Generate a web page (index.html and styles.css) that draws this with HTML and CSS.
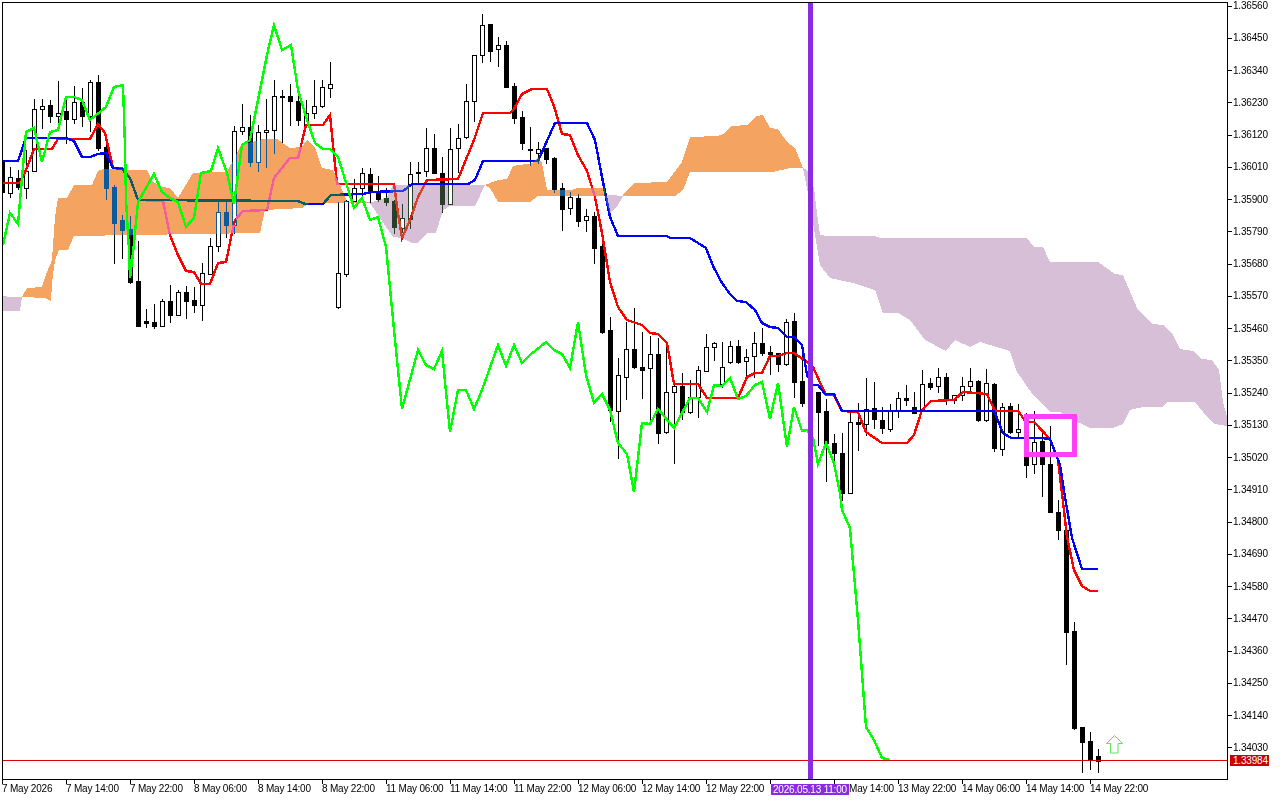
FILE: index.html
```html
<!DOCTYPE html>
<html lang="en">
<head>
<meta charset="utf-8">
<title>GBPUSD chart</title>
<link rel="stylesheet" href="styles.css">
</head>
<body>
<div class="terminal">
  <div class="chart-row">
    <div class="plot">
      <svg class="plot-svg" viewBox="3 3 1224 776" xmlns="http://www.w3.org/2000/svg">
        <defs>
          <clipPath id="hollow-clip"><path id="hollow-clip-path"></path></clipPath>
          <g id="mas">
            <polyline id="line-red" class="ma ma-red"></polyline>
            <polyline id="line-blue" class="ma ma-blue"></polyline>
          </g>
        </defs>
        <rect class="paper" x="3" y="3" width="1224" height="776"></rect>
        <path id="wicks" class="wicks"></path>
        <path id="solid" class="solid"></path>
        <path id="outline" class="outline"></path>
        <use href="#mas"></use>
        <path id="cloud-up" class="cloud cloud-up"></path>
        <path id="cloud-down" class="cloud cloud-down"></path>
        <path id="hollow" class="hollow"></path>
        <g clip-path="url(#hollow-clip)"><use href="#mas"></use></g>
        <polyline id="line-green" class="ma ma-green"></polyline>
        <rect class="price-line" x="3" y="760" width="1224" height="1"></rect>
        <rect class="vline" x="808" y="3" width="5" height="776"></rect>
        <rect class="box" x="1026.5" y="416.5" width="48" height="38"></rect>
        <path class="arrow" d="M1114.5 735.500l8 8h-4.500v9.500h-7.500v-9.500h-4z"></path>
      </svg>
    </div>
    <div class="price-axis">
      <span class="price">1.36560</span>
      <span class="price">1.36450</span>
      <span class="price">1.36340</span>
      <span class="price">1.36230</span>
      <span class="price">1.36120</span>
      <span class="price">1.36010</span>
      <span class="price">1.35900</span>
      <span class="price">1.35790</span>
      <span class="price">1.35680</span>
      <span class="price">1.35570</span>
      <span class="price">1.35460</span>
      <span class="price">1.35350</span>
      <span class="price">1.35240</span>
      <span class="price">1.35130</span>
      <span class="price">1.35020</span>
      <span class="price">1.34910</span>
      <span class="price">1.34800</span>
      <span class="price">1.34690</span>
      <span class="price">1.34580</span>
      <span class="price">1.34470</span>
      <span class="price">1.34360</span>
      <span class="price">1.34250</span>
      <span class="price">1.34140</span>
      <span class="price">1.34030</span>
      <span class="price-tag">1.33984</span>
    </div>
  </div>
  <div class="time-axis">
    <span class="time">7 May 2026</span>
    <span class="time">7 May 14:00</span>
    <span class="time">7 May 22:00</span>
    <span class="time">8 May 06:00</span>
    <span class="time">8 May 14:00</span>
    <span class="time">8 May 22:00</span>
    <span class="time">11 May 06:00</span>
    <span class="time">11 May 14:00</span>
    <span class="time">11 May 22:00</span>
    <span class="time">12 May 06:00</span>
    <span class="time">12 May 14:00</span>
    <span class="time">12 May 22:00</span>
    <span class="time"></span>
    <span class="time time-clipped">May 14:00</span>
    <span class="time">13 May 22:00</span>
    <span class="time">14 May 06:00</span>
    <span class="time">14 May 14:00</span>
    <span class="time">14 May 22:00</span>
    <span class="time-tag">2026.05.13 11:00</span>
  </div>
</div>
<script src="chart.js"></script>
</body>
</html>
```
FILE: styles.css
```css
* { box-sizing: border-box; }
html, body { margin: 0; padding: 0; background: #fff; }
.terminal {
  position: relative;
  width: 1280px;
  height: 800px;
  padding: 2px 0 0 2px;
  overflow: hidden;
  background: #fff;
  color: #000;
  font: 10px/12px "Liberation Sans", sans-serif;
  letter-spacing: -0.2px;
}
.chart-row { display: flex; height: 778px; }
.plot { width: 1226px; height: 778px; border: 1px solid #000; flex: none; }
.plot-svg { display: block; width: 1224px; height: 776px; }

.paper { fill: #fff; }
.wicks { stroke: #000; stroke-width: 1; fill: none; shape-rendering: crispEdges; }
.outline { stroke: #000; stroke-width: 1; fill: none; shape-rendering: crispEdges; }
.solid { fill: #000; shape-rendering: crispEdges; }
.hollow { fill: #fff; shape-rendering: crispEdges; }
.ma { fill: none; stroke-width: 2.4; stroke-linejoin: miter; shape-rendering: crispEdges; }
.ma-red { stroke: #f00; }
.ma-blue { stroke: #00f; }
.ma-green { stroke: #0f0; }
.cloud { mix-blend-mode: difference; shape-rendering: crispEdges; }
.cloud-up { fill: #0b5b9f; }
.cloud-down { fill: #274027; }
.price-line { fill: #dc0000; }
.vline { fill: #8a2be2; }
.box { fill: none; stroke: #ff40f6; stroke-width: 5; shape-rendering: crispEdges; }
.arrow { fill: #fff; stroke: #5ee35e; stroke-width: 1; }

.price-axis {
  position: relative;
  flex: none;
  width: 52px;
  height: 754px;
  margin-top: -2px;
  display: flex;
  flex-direction: column;
  justify-content: space-between;
}
.price { display: flex; align-items: center; height: 12px; white-space: nowrap; }
.price::before {
  content: "";
  width: 4px;
  height: 1px;
  margin-right: 1px;
  background: #000;
}
.price-tag {
  position: absolute;
  left: 2px;
  top: 755px;
  width: 39px;
  height: 11px;
  padding-left: 3px;
  line-height: 11px;
  background: #c80000;
  color: #fff;
}

.time-axis {
  position: relative;
  display: flex;
  height: 20px;
}
.time {
  position: relative;
  flex: none;
  width: 64px;
  padding-top: 3px;
  white-space: nowrap;
}
.time-clipped { padding-left: 15px; }
.time::before {
  content: "";
  position: absolute;
  left: 0;
  top: 0;
  width: 1px;
  height: 4px;
  background: #000;
}
.time-tag {
  position: absolute;
  left: 769px;
  top: 4px;
  width: 78px;
  height: 11px;
  padding-left: 2px;
  line-height: 11px;
  background: #8a2be2;
  color: #fff;
  white-space: nowrap;
}
```
FILE: chart.js
```js
// x, wick top, wick bottom, body top, body bottom, bearish(1)/bullish(0)
var candles = [
[2,161,192,161,192,1],[10,167,197,177,193,0],[18,170,189,178,187,1],[26,150,198,171,188,0],
[34,99,171,109,171,0],[42,99,128,106,109,0],[50,100,122,105,116,1],[58,81,122,113,116,0],
[66,97,143,111,119,1],[74,86,123,102,119,0],[82,88,126,102,116,1],[90,80,131,82,116,0],
[98,75,150,82,148,1],[106,142,199,147,188,1],[114,185,263,187,223,1],[122,215,258,220,230,1],
[130,216,283,229,282,1],[138,241,326,281,326,1],[146,309,327,321,323,1],[154,304,328,322,326,1],
[162,299,326,301,326,0],[170,285,322,301,315,1],[178,290,315,292,315,0],[186,286,318,292,301,1],
[194,287,312,300,305,1],[202,263,320,273,305,0],[210,238,274,246,274,0],[218,199,251,212,246,0],
[226,199,237,212,225,1],[234,126,233,131,225,0],[242,104,134,127,131,0],[250,115,166,127,162,1],
[258,125,171,132,162,0],[266,99,167,130,132,0],[274,80,153,96,130,0],[282,90,142,96,97,1],
[290,84,125,96,101,1],[298,90,125,101,120,1],[306,100,125,113,125,0],[314,80,118,106,113,0],
[322,80,107,87,106,0],[330,62,97,84,88,0],[338,202,308,273,307,0],[346,200,276,201,274,0],
[354,179,201,188,201,0],[362,168,201,173,188,0],[370,168,202,174,192,1],[378,176,201,192,199,1],
[386,188,205,198,202,1],[394,200,233,201,227,1],[402,204,232,218,228,0],[410,162,228,174,219,0],
[418,162,182,172,173,0],[426,128,176,148,171,0],[434,134,173,148,173,1],[442,157,212,173,204,1],
[450,128,204,149,204,0],[458,124,172,138,148,0],[466,84,138,101,137,0],[474,55,121,55,101,0],
[482,14,62,25,55,0],[490,24,61,24,51,1],[498,37,66,45,49,0],[506,41,87,45,87,1],
[514,83,123,86,118,1],[522,111,149,117,143,1],[530,127,165,149,150,1],[538,142,163,149,153,0],
[546,148,163,148,159,1],[554,157,192,158,189,1],[562,183,230,188,209,1],[570,192,214,197,208,0],
[578,194,226,198,221,1],[586,209,231,216,220,0],[594,212,263,216,248,1],[602,229,333,246,332,1],
[610,317,421,330,410,1],[618,358,458,375,411,0],[626,322,399,349,377,0],[634,308,368,349,367,1],
[642,332,398,367,370,1],[650,336,422,354,368,0],[658,338,443,354,433,1],[666,343,433,392,432,0],
[674,383,463,386,392,0],[682,373,419,386,412,1],[690,380,413,397,412,0],[698,366,417,370,397,0],
[706,334,371,347,371,0],[714,342,360,343,347,0],[722,342,387,367,384,0],[730,341,363,346,362,0],
[738,340,363,346,362,1],[746,349,375,357,361,0],[754,332,377,343,356,0],[762,328,355,343,353,1],
[770,346,374,352,354,1],[778,353,371,353,364,1],[786,319,365,322,364,0],[794,313,397,321,382,1],
[802,355,406,381,403,1],[818,392,445,392,412,1],[826,399,481,411,443,1],[834,434,466,443,453,1],
[842,433,500,453,493,1],[850,412,493,422,493,0],[858,403,450,422,424,1],[866,378,435,409,424,0],
[874,382,428,408,419,1],[882,407,433,420,428,1],[890,404,431,411,429,0],[898,392,417,398,411,0],
[906,385,405,398,400,1],[914,392,413,407,413,1],[922,370,411,384,411,0],[930,378,389,383,387,1],
[938,368,392,377,386,0],[946,373,404,377,399,1],[954,395,403,395,400,0],[962,377,400,386,395,0],
[970,368,392,381,386,0],[978,380,421,381,420,1],[986,369,421,383,420,0],[994,383,451,384,448,1],
[1002,403,455,407,449,0],[1010,403,433,406,432,1],[1018,404,438,429,432,0],[1026,413,477,440,465,1],
[1034,411,473,442,464,0],[1042,433,496,441,464,1],[1050,426,512,464,512,1],[1058,500,539,512,530,1],
[1066,528,664,530,632,1],[1074,622,729,631,728,1],[1082,727,772,727,742,1],[1090,732,769,741,759,1],
[1098,749,772,756,761,1]
];

var red = [[2,183],[20,183],[26,170],[34,149],[52,149],[58,139],[90,139],[98,124],[105,133],[113,168],[122,168],[130,178],[138,200],[163,201],[170,235],[177,253],[186,271],[194,272],[201,284],[210,284],[218,263],[226,262],[232,233],[235,220],[243,211],[267,210],[274,178],[290,158],[298,158],[306,125],[323,125],[330,115],[337,184],[394,184],[398,213],[402,238],[410,220],[418,197],[427,180],[458,179],[467,157],[474,140],[483,113],[510,113],[514,109],[522,94],[532,89],[547,89],[554,106],[562,134],[570,135],[578,155],[587,171],[595,197],[602,233],[610,282],[618,307],[627,320],[642,325],[650,333],[658,334],[667,343],[674,384],[698,384],[707,398],[738,398],[747,377],[755,373],[762,373],[770,356],[778,356],[787,353],[794,353],[807,362],[813,367],[818,378],[826,395],[834,395],[842,411],[858,412],[866,432],[882,443],[907,443],[914,435],[922,410],[931,401],[954,400],[963,392],[987,394],[995,411],[1018,411],[1026,422],[1034,422],[1050,439],[1058,460],[1062,493],[1067,537],[1074,570],[1082,586],[1090,591],[1098,591]];

var blue = [[2,161],[18,161],[26,138],[66,138],[74,141],[82,157],[90,157],[98,154],[106,153],[113,168],[122,169],[130,178],[138,200],[298,201],[305,204],[323,204],[331,195],[363,194],[371,192],[403,191],[412,184],[468,184],[475,180],[483,161],[538,161],[555,123],[587,123],[595,140],[602,177],[610,217],[618,236],[667,236],[670,238],[690,238],[698,243],[706,248],[714,268],[722,283],[730,294],[737,301],[746,302],[755,310],[762,323],[770,327],[778,328],[787,337],[794,337],[802,345],[807,375],[813,385],[818,385],[825,394],[834,394],[842,411],[994,411],[1003,433],[1011,438],[1042,438],[1050,439],[1060,465],[1065,497],[1072,538],[1082,569],[1098,569]];

var green = [[3,245],[10,213],[18,224],[26,132],[34,128],[42,162],[50,132],[58,130],[66,97],[74,97],[82,100],[90,120],[106,107],[114,87],[123,85],[125,147],[126,200],[129,250],[130,278],[133,253],[138,202],[154,174],[162,192],[170,198],[178,202],[186,227],[194,218],[201,173],[211,171],[218,148],[227,173],[234,204],[242,145],[250,140],[258,100],[267,55],[274,25],[282,50],[291,45],[298,90],[307,120],[315,143],[323,149],[330,149],[338,157],[354,208],[362,198],[370,220],[378,217],[386,247],[395,340],[402,409],[418,350],[426,365],[434,369],[442,351],[450,432],[458,390],[466,390],[474,409],[482,390],[498,345],[506,366],[514,345],[522,363],[530,355],[546,342],[554,350],[562,354],[570,368],[578,322],[586,375],[594,403],[602,394],[610,410],[618,443],[627,454],[634,492],[642,423],[650,424],[658,409],[674,428],[690,398],[698,398],[707,412],[714,385],[722,386],[730,378],[738,399],[746,396],[755,385],[762,382],[770,419],[778,383],[787,447],[794,407],[802,431],[807,430],[813,438],[818,464],[826,443],[834,463],[840,493],[842,510],[850,528],[851,540],[858,620],[866,727],[874,740],[882,758],[890,760]];

// span A above span B: orange lobes
var up = [
[[22,297],[27,288],[42,287],[45,277],[52,260],[55,217],[58,198],[67,198],[74,185],[92,185],[98,171],[103,169],[147,170],[153,182],[162,187],[170,188],[178,198],[193,173],[227,172],[235,157],[242,143],[248,143],[263,139],[277,139],[290,148],[302,147],[307,140],[315,148],[322,168],[333,170],[340,185],[347,202],[370,202],[370,203],[323,203],[310,203],[302,208],[265,210],[260,233],[74,236],[68,250],[59,250],[55,260],[52,283],[51,301],[45,298]],
[[485,185],[498,180],[507,179],[513,166],[533,163],[538,157],[542,163],[547,190],[572,190],[577,188],[605,188],[605,196],[538,196],[530,202],[498,202],[490,188]],
[[623,195],[634,183],[667,182],[682,162],[690,137],[717,136],[723,134],[732,126],[747,125],[757,116],[763,115],[770,128],[778,129],[787,142],[795,148],[803,168],[790,168],[773,172],[690,172],[683,190],[675,196],[623,196]]
];

// span B above span A: thistle lobes
var down = [
[[3,296],[10,297],[22,297],[20,311],[3,311]],
[[370,203],[387,197],[393,185],[485,185],[475,206],[450,206],[443,210],[436,233],[427,233],[418,243],[412,243],[402,238],[393,237],[380,218]],
[[605,196],[610,195],[623,196],[617,207],[610,213],[607,205]],
[[803,168],[807,170],[814,188],[817,213],[820,235],[827,236],[875,236],[880,238],[1027,238],[1034,247],[1043,247],[1050,262],[1098,262],[1115,274],[1123,275],[1138,310],[1153,324],[1163,325],[1172,333],[1180,349],[1193,351],[1202,359],[1212,360],[1219,370],[1223,402],[1227,417],[1227,426],[1215,424],[1207,417],[1195,402],[1168,402],[1162,407],[1143,407],[1130,410],[1123,424],[1113,428],[1090,428],[1067,417],[1060,412],[1050,412],[1033,395],[1017,372],[1010,351],[1000,348],[980,342],[970,347],[955,340],[946,351],[925,340],[910,320],[898,313],[883,313],[875,290],[853,283],[830,278],[820,265],[813,223],[807,188]]
];

function pts(a) { return a.map(function (p) { return p[0] + "," + p[1]; }).join(" "); }
function lobes(a) { return a.map(function (l) { return "M" + pts(l) + "Z"; }).join(""); }
function set(id, attr, v) { document.getElementById(id).setAttribute(attr, v); }

var wicks = "", solid = "", outline = "", hollow = "";
candles.forEach(function (c) {
  var x = c[0], wt = c[1], wb = c[2], bt = c[3], bb = c[4], h = bb - bt;
  wicks += "M" + (x + 0.5) + " " + wt + "V" + (wb + 1);
  if (c[5]) {
    solid += "M" + (x - 2) + " " + bt + "h5v" + (h + 1) + "h-5z";
  } else {
    outline += "M" + (x - 1.5) + " " + (bt + 0.5) + "h4v" + h + "h-4z";
    if (h > 1) hollow += "M" + (x - 1) + " " + (bt + 1) + "h3v" + (h - 1) + "h-3z";
  }
});
set("wicks", "d", wicks);
set("solid", "d", solid);
set("outline", "d", outline);
set("hollow", "d", hollow);
set("hollow-clip-path", "d", hollow);
set("line-red", "points", pts(red));
set("line-blue", "points", pts(blue));
set("line-green", "points", pts(green));
set("cloud-up", "d", lobes(up));
set("cloud-down", "d", lobes(down));
```
